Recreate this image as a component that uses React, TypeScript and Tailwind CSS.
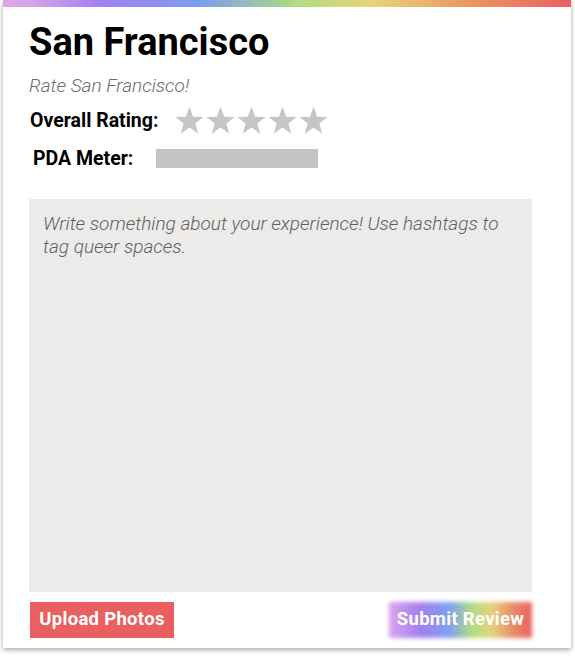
import React from "react";

const Star = () => (
  <svg width="31" height="30" viewBox="0 0 24 23" className="block">
    <polygon
      points="12,0.5 14.8,8.2 22.9,8.4 16.5,13.4 18.8,21.3 12,16.6 5.2,21.3 7.5,13.4 1.1,8.4 9.2,8.2"
      fill="#c6c6c6"
    />
  </svg>
);

export default function App() {
  const font = { fontFamily: "Roboto, 'Liberation Sans', sans-serif" };
  return (
    <div className="w-[575px] h-[656px] bg-white" style={font}>
      <div className="ml-[3px] w-[568px] bg-white shadow-[0_2px_5px_rgba(0,0,0,0.35)]">
        <div className="h-[7px] bg-[linear-gradient(90deg,#dca6e8_0%,#d7a3e8_5%,#a47ff0_17%,#7a9cf0_34%,#b0dd80_52%,#e6d47c_65%,#ea9762_82%,#eb5f64_100%)]" />
        <div className="pl-[26px] pr-[39px] pb-[10px]">
          <h1 className="mt-[13px] text-[38px] leading-[44px] font-bold text-black">
            San Francisco
          </h1>
          <p className="mt-[11px] text-[19px] leading-[22px] italic font-light text-[#6b6b6b]">
            Rate San Francisco!
          </p>
          <div className="mt-[9px] flex items-center">
            <span className="ml-[1px] text-[19.5px] font-bold text-black w-[146px]">Overall Rating:</span>
            <div className="flex -ml-[2px]">
              <Star />
              <Star />
              <Star />
              <Star />
              <Star />
            </div>
          </div>
          <div className="mt-[8px] flex items-center">
            <span className="ml-[4px] text-[19.5px] font-bold text-black w-[123px]">PDA Meter:</span>
            <div className="w-[162px] h-[19px] bg-[#c4c4c4]" />
          </div>
          <div className="mt-[26px] w-[503px] h-[393px] bg-[#ecebea] px-[14px] pt-[13px]">
            <p className="text-[19px] leading-[23px] italic font-light text-[#5f5f5f]">
              Write something about your experience! Use hashtags to tag queer spaces.
            </p>
          </div>
          <div className="mt-[10px] w-[503px] flex justify-between">
            <button className="ml-[1px] w-[144px] h-[36px] bg-[#ea5f5f] text-white text-[18.5px] font-bold tracking-[0.3px]">
              Upload Photos
            </button>
            <button className="relative w-[143px] h-[36px] text-white text-[18.5px] font-bold tracking-[0.3px]">
              <span className="absolute inset-0 blur-[2px] bg-[linear-gradient(90deg,#dba4ea_0%,#a47ff0_22%,#7ea0f0_42%,#b2dc84_58%,#e5d27c_72%,#e8906a_86%,#ea5f5f_100%)]" />
              <span className="relative">Submit Review</span>
            </button>
          </div>
        </div>
      </div>
    </div>
  );
}
